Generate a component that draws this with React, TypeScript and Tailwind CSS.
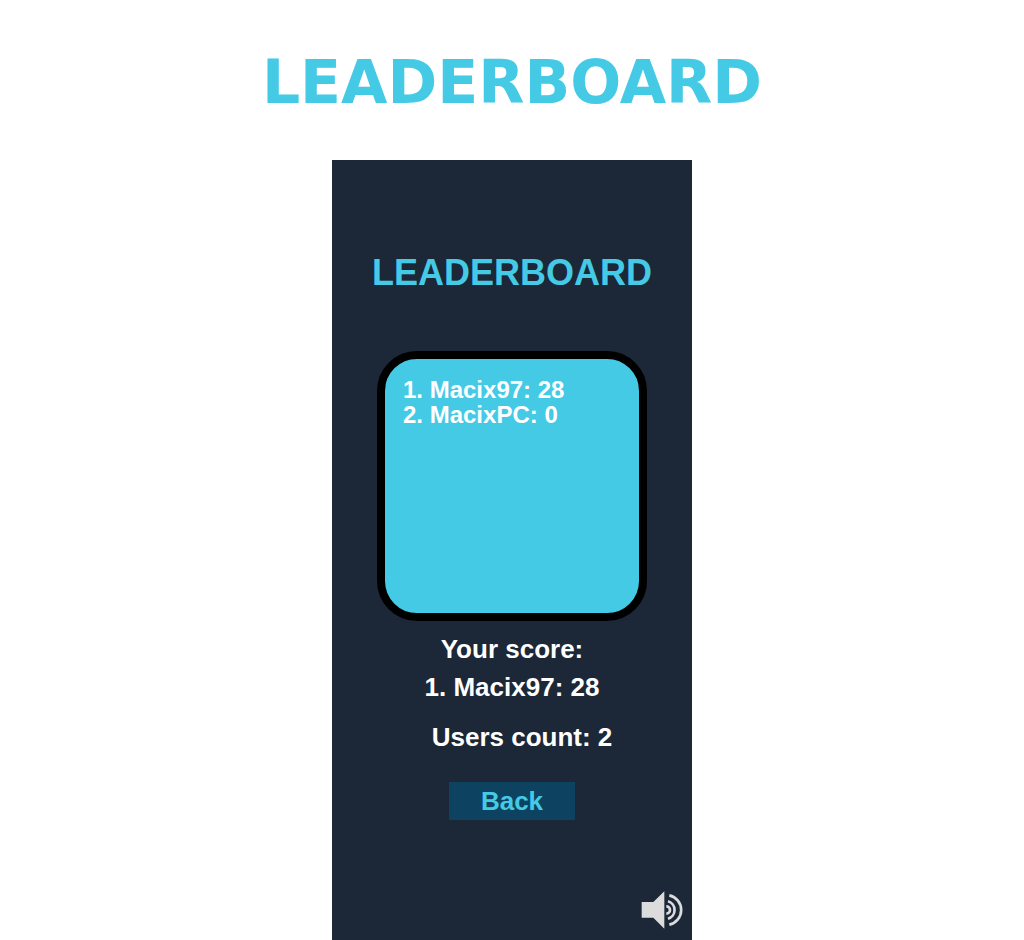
type Entry = { name: string; score: number };

const entries: Entry[] = [
  { name: "Macix97", score: 28 },
  { name: "MacixPC", score: 0 },
];

function SoundIcon() {
  return (
    <svg viewBox="0 0 126 114" className="h-[38px] w-[42px]" aria-hidden="true">
      <path d="M2 33H37L70 1V113L37 80H2Z" fill="#dcdcdc" />
      <g fill="none" stroke="#dcdcdc" strokeWidth="8">
        <path d="M76 46A11 11 0 0 1 76 68" />
        <path d="M81 31A27 27 0 0 1 81 83" />
        <path d="M85 13A45 45 0 0 1 85 101" />
      </g>
    </svg>
  );
}

export default function App() {
  return (
    <main className="flex min-h-screen flex-col items-center bg-white">
      <header className="flex h-40 items-center pt-1">
        <h1 className="font-[Verdana,'DejaVu_Sans',sans-serif] text-[60px] leading-[70px] font-bold text-[#45cae6]">
          LEADERBOARD
        </h1>
      </header>

      <section className="flex w-full max-w-[360px] flex-1 flex-col items-center bg-[#1c2737] pt-[92px] font-['Liberation_Sans',sans-serif] font-bold text-white">
        <h2 className="text-[36px] leading-[42px] text-[#45cae6]">LEADERBOARD</h2>

        <ol className="mt-[57px] aspect-square w-3/4 rounded-[40px] border-8 border-black bg-[#45cae6] px-[18px] py-[18px] text-[24px] leading-[25px]">
          {entries.map((entry, i) => (
            <li key={entry.name}>{`${i + 1}. ${entry.name}: ${entry.score}`}</li>
          ))}
        </ol>

        <div className="mt-[9px] text-center text-[26px] leading-[38px]">
          <p>Your score:</p>
          <p>1. Macix97: 28</p>
        </div>
        <p className="mt-3 pl-5 text-[26px] leading-[38px]">Users count: 2</p>

        <button
          type="button"
          className="mt-[26px] h-[38px] w-[126px] bg-[#0d4361] text-[26px] leading-[38px] text-[#45cae6]"
        >
          Back
        </button>

        <button type="button" aria-label="Toggle sound" className="mt-auto mr-[9px] mb-[11px] self-end">
          <SoundIcon />
        </button>
      </section>
    </main>
  );
}
